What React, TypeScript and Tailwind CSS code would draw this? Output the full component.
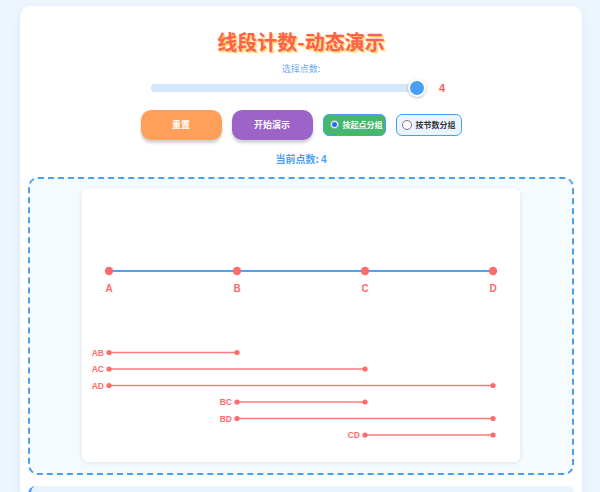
import React from "react";

const points = [
  { label: "A", x: 27 },
  { label: "B", x: 155 },
  { label: "C", x: 283 },
  { label: "D", x: 411 },
];

const segments = [
  { name: "AB", from: 0, to: 1 },
  { name: "AC", from: 0, to: 2 },
  { name: "AD", from: 0, to: 3 },
  { name: "BC", from: 1, to: 2 },
  { name: "BD", from: 1, to: 3 },
  { name: "CD", from: 2, to: 3 },
];

function Diagram() {
  return (
    <svg width="438" height="274" viewBox="0 0 438 274" className="block">
      <line x1={27} y1={83} x2={411} y2={83} stroke="#4aa3f5" strokeWidth={2} />
      {points.map((p) => (
        <g key={p.label}>
          <circle cx={p.x} cy={83} r={4.2} fill="#ff6b6b" />
          <text
            x={p.x}
            y={104}
            textAnchor="middle"
            fontSize="10"
            fontWeight="700"
            fill="#ff6b6b"
            fontFamily="'Liberation Sans', Arial, sans-serif"
          >
            {p.label}
          </text>
        </g>
      ))}
      {segments.map((s, i) => {
        const y = 164.5 + i * 16.5;
        const x1 = points[s.from].x;
        const x2 = points[s.to].x;
        return (
          <g key={s.name}>
            <line x1={x1} y1={y} x2={x2} y2={y} stroke="#ff7b7b" strokeWidth={1.6} />
            <circle cx={x1} cy={y} r={2.6} fill="#ff6b6b" />
            <circle cx={x2} cy={y} r={2.6} fill="#ff6b6b" />
            <text
              x={x1 - 5}
              y={y + 3}
              textAnchor="end"
              fontSize="8.5"
              fontWeight="700"
              fill="#ff6b6b"
              fontFamily="'Liberation Sans', Arial, sans-serif"
            >
              {s.name}
            </text>
          </g>
        );
      })}
    </svg>
  );
}

export default function App() {
  return (
    <div
      className="w-[600px] h-[492px] overflow-hidden bg-[#eef6fd] pt-[6px] pl-[20px]"
      style={{ fontFamily: "'Noto Sans CJK SC', 'Liberation Sans', sans-serif" }}
    >
      <div className="w-[562px] h-[520px] bg-white rounded-[10px] shadow-[0_2px_10px_rgba(80,140,200,0.12)] px-[8px] pt-[24px]">
        <h1 className="text-center text-[20px] leading-[24px] font-bold text-[#ff6150] [text-shadow:1px_1px_0_#ffcf55,2px_2px_1px_rgba(255,200,80,0.5)]">
          线段计数-动态演示
        </h1>

        <div className="mt-[9px] text-center text-[9px] leading-[12px] text-[#6aaaf0]">选择点数:</div>

        <div className="mt-[5px] flex items-center justify-center pr-[6px]">
          <div className="relative w-[275px] h-[8px] rounded-full bg-[#d2e7fb]">
            <div className="absolute right-0 top-[-5px] w-[18px] h-[18px] rounded-full bg-[#4a9ff5] border-2 border-white shadow-[0_1px_3px_rgba(0,0,0,0.25)]" />
          </div>
          <span className="ml-[13px] text-[11px] font-bold text-[#ff5a5a] font-['Liberation_Sans']">4</span>
        </div>

        <div className="mt-[13px] flex items-center justify-center gap-[10px]">
          <button className="w-[81px] h-[30px] rounded-[10px] bg-[#ff9f5a] text-white text-[9px] font-bold shadow-[0_3px_3px_rgba(0,0,0,0.18)]">
            重置
          </button>
          <button className="w-[81px] h-[30px] rounded-[10px] bg-[#9c63c8] text-white text-[9px] font-bold shadow-[0_3px_3px_rgba(0,0,0,0.18)]">
            开始演示
          </button>
          <div className="flex items-center gap-[4px] h-[22px] w-[63px] rounded-[6px] bg-[#45b86a] border-[1.5px] border-[#4a9ff5] pl-[6px] text-white text-[8px] font-bold">
            <span className="w-[9px] h-[9px] rounded-full bg-white border border-[#8ab] flex items-center justify-center">
              <span className="w-[5px] h-[5px] rounded-full bg-[#1a73e8]" />
            </span>
            按起点分组
          </div>
          <div className="flex items-center gap-[4px] h-[22px] w-[66px] rounded-[6px] bg-[#eaf5ff] border-[1.5px] border-[#4a9ff5] pl-[5px] text-[#333] text-[8px] font-bold">
            <span className="w-[10px] h-[10px] rounded-full bg-white border border-[#777]" />
            按节数分组
          </div>
        </div>

        <div className="mt-[11px] text-center text-[10px] font-bold text-[#4a9ff5]">
          当前点数: <span className="font-['Liberation_Sans']">4</span>
        </div>

        <div className="mt-[10px] h-[298px] rounded-[10px] border-2 border-dashed border-[#4a9ff5] bg-[#f5fbff] pt-[9px] flex justify-center">
          <div className="w-[438px] h-[274px] bg-white rounded-[6px] shadow-[0_1px_5px_rgba(0,0,0,0.1)]">
            <Diagram />
          </div>
        </div>

        <div className="mt-[11px] h-[40px] rounded-[8px] bg-[#e8f4fd] border-l-[3px] border-[#4a9ff5]" />
      </div>
    </div>
  );
}
